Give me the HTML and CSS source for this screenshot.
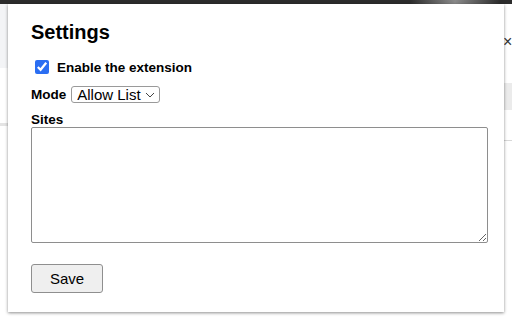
FILE: index.html
```html
<!DOCTYPE html>
<html>
<head>
<meta charset="utf-8">
<link rel="stylesheet" href="styles.css">
</head>
<body>
<div class="page">
  <div class="topbar"><div class="topbar-glow"></div></div>
  <div class="backdrop">
    <div class="side side-left">
      <div class="l-band"></div>
      <div class="l-gap"></div>
      <div class="l-line"></div>
    </div>
    <div class="side side-right">
      <div class="r-top"><span class="r-x">×</span></div>
      <div class="r-band"></div>
      <div class="r-gap"></div>
      <div class="r-line"></div>
    </div>
  </div>
  <div class="popup">
    <h1 class="title">Settings</h1>
    <label class="row check-row">
      <input type="checkbox" class="check" checked>
      <span class="bold">Enable the extension</span>
    </label>
    <div class="row mode-row">
      <span class="bold">Mode</span>
      <span class="select-wrap">
        <select class="select"><option>Allow List</option><option>Block List</option></select>
        <svg class="chev" width="10" height="6" viewBox="0 0 10 6"><path d="M1 1 L5 5 L9 1" fill="none" stroke="#444" stroke-width="1"/></svg>
      </span>
    </div>
    <div class="bold sites-label">Sites</div>
    <textarea class="sites"></textarea>
    <div><button class="save">Save</button></div>
  </div>
</div>
</body>
</html>
```

FILE: styles.css
```css
html, body {
  margin: 0;
  padding: 0;
}
body {
  width: 512px;
  height: 320px;
  overflow: hidden;
  background: #ffffff;
  font-family: "Liberation Sans", Arial, sans-serif;
  color: #000;
}
.page {
  position: relative;
  width: 512px;
  height: 320px;
  display: flex;
  flex-direction: column;
}
.topbar {
  height: 4px;
  background: #2c2c2c;
  display: flex;
  justify-content: flex-end;
}
.topbar-glow {
  width: 90px;
  margin-right: 12px;
  background: linear-gradient(90deg, #2c2c2c, #8a8a8a 50%, #2c2c2c);
}
.backdrop {
  flex: 1;
  display: flex;
  justify-content: space-between;
}
.side {
  width: 8px;
  display: flex;
  flex-direction: column;
}
.l-band {
  height: 64px;
  background: #f3f4f6;
}
.l-gap {
  height: 55px;
}
.l-line {
  height: 3px;
  background: #e4e4e4;
}
.r-top {
  height: 79px;
  position: relative;
}
.r-x {
  position: absolute;
  left: -1px;
  top: 30px;
  font-size: 16px;
  line-height: 16px;
  color: #333;
}
.r-band {
  height: 27px;
  background: #ebebeb;
}
.r-gap {
  height: 30px;
}
.r-line {
  height: 1px;
  background: #d8d8d8;
}
.popup {
  position: absolute;
  left: 8px;
  top: 4px;
  width: 496px;
  height: 308px;
  box-sizing: border-box;
  background: #fff;
  box-shadow: 0 1px 3px rgba(0, 0, 0, 0.45);
  padding: 16px 16px 0 23px;
  display: flex;
  flex-direction: column;
}
.title {
  margin: 0;
  font-size: 20px;
  line-height: 24px;
  font-weight: bold;
}
.bold {
  font-weight: bold;
  font-size: 13.5px;
}
.row {
  display: flex;
  align-items: center;
}
.check-row {
  margin-top: 13px;
  height: 20px;
  gap: 8px;
  padding-left: 4px;
}
.check {
  margin: 0;
  width: 14px;
  height: 14px;
  accent-color: #2b6ef2;
}
.mode-row {
  margin-top: 8px;
  height: 19px;
  gap: 5px;
}
.select-wrap {
  display: inline-flex;
  align-items: center;
  width: 89px;
  height: 17px;
  box-sizing: border-box;
  border: 1px solid #9a9a9a;
  border-radius: 3px;
  padding: 0 4px 0 5px;
  background: #fff;
}
.select {
  appearance: none;
  -webkit-appearance: none;
  border: none;
  outline: none;
  background: transparent;
  font-family: "Liberation Sans", Arial, sans-serif;
  font-size: 15px;
  line-height: 15px;
  padding: 0;
  margin: 0;
  flex: 1;
  color: #000;
}
.chev {
  flex: none;
}
.sites-label {
  margin-top: 9px;
  line-height: 14px;
  height: 14px;
}
.sites {
  margin: 0;
  width: 457px;
  height: 116px;
  box-sizing: border-box;
  border: 1px solid #8e8e8e;
  border-radius: 2px;
  resize: both;
  font-family: "Liberation Sans", Arial, sans-serif;
}
.save {
  margin-top: 21px;
  width: 72px;
  height: 29px;
  background: #efefef;
  border: 1px solid #8f8f8f;
  border-radius: 3px;
  font-family: "Liberation Sans", Arial, sans-serif;
  font-size: 15px;
  color: #000;
  padding: 0;
}
```
